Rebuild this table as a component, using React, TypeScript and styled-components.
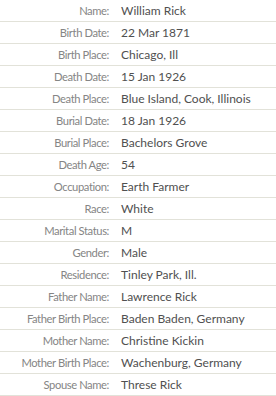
import React from "react";
import styled, { createGlobalStyle } from "styled-components";

const GlobalStyle = createGlobalStyle`
	html, body {
		margin: 0;
		padding: 0;
		background: #fff;
	}
	body {
		font-family: Lato, "Open Sans", sans-serif;
	}
`;

const Table = styled.div`
	width: 276px;
	display: flex;
	flex-direction: column;
`;

const Row = styled.div`
	display: grid;
	grid-template-columns: 111px 1fr;
	height: 22px;
	box-sizing: border-box;
	border-bottom: 1px solid #e2e2d9;
	align-items: center;
	padding-top: 1px;
	line-height: 20px;
`;

const Label = styled.div`
	text-align: right;
	padding-right: 2px;
	font-size: 11.2px;
	letter-spacing: -0.4px;
	color: #858585;
	white-space: nowrap;
`;

const Value = styled.div`
	padding-left: 10px;
	font-size: 12px;
	color: #505050;
	white-space: nowrap;
`;

const facts: [string, string][] = [
	["Name", "William Rick"],
	["Birth Date", "22 Mar 1871"],
	["Birth Place", "Chicago, Ill"],
	["Death Date", "15 Jan 1926"],
	["Death Place", "Blue Island, Cook, Illinois"],
	["Burial Date", "18 Jan 1926"],
	["Burial Place", "Bachelors Grove"],
	["Death Age", "54"],
	["Occupation", "Earth Farmer"],
	["Race", "White"],
	["Marital Status", "M"],
	["Gender", "Male"],
	["Residence", "Tinley Park, Ill."],
	["Father Name", "Lawrence Rick"],
	["Father Birth Place", "Baden Baden, Germany"],
	["Mother Name", "Christine Kickin"],
	["Mother Birth Place", "Wachenburg, Germany"],
	["Spouse Name", "Threse Rick"],
];

const App = () => (
	<>
		<GlobalStyle />
		<Table>
			{facts.map(([label, value]) => (
				<Row key={label}>
					<Label>{label}:</Label>
					<Value>{value}</Value>
				</Row>
			))}
		</Table>
	</>
);

export default App;
